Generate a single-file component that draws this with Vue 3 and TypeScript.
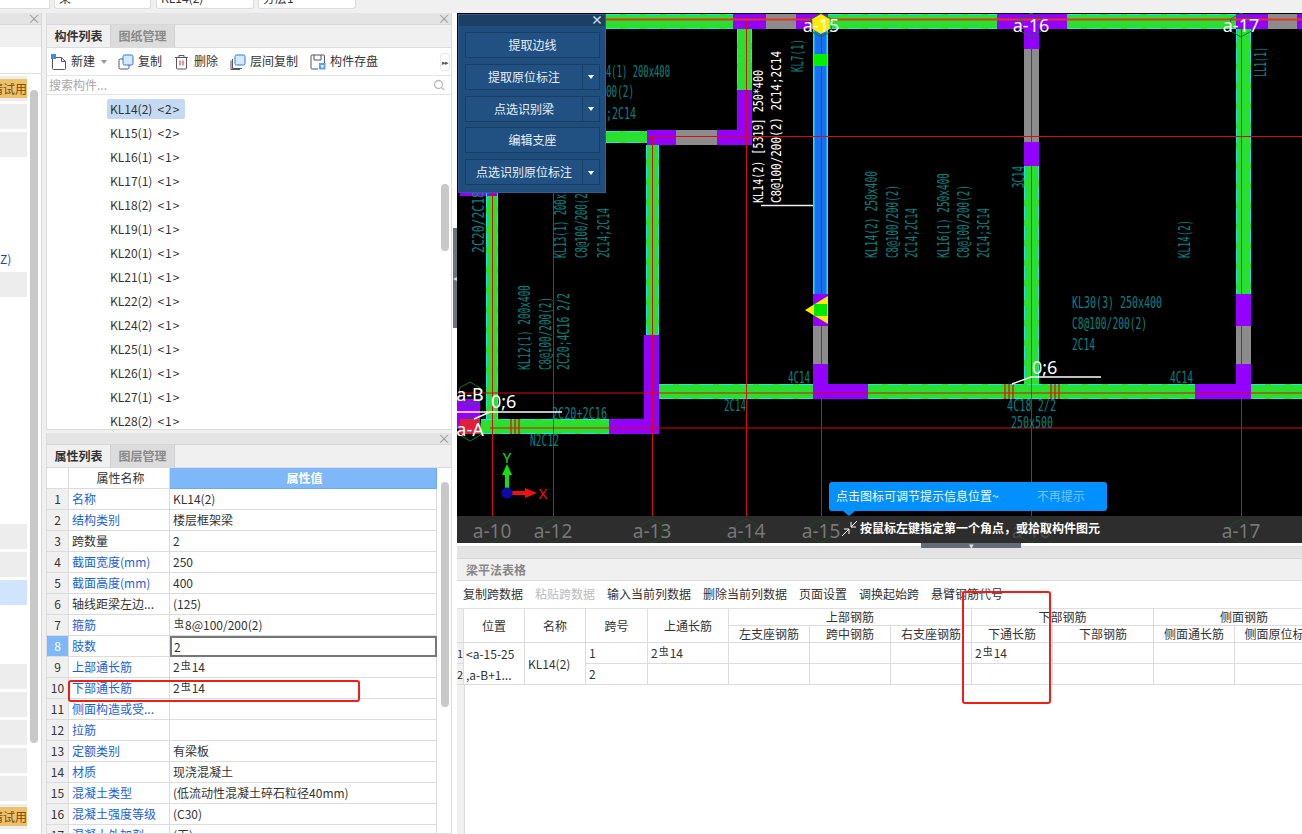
<script setup lang="ts">
type Seg = { x: number; y: number; w: number; h: number; c: string };
type Txt = { t: string; x: number; y: number; len: number; rot?: boolean };

const G = '#2ae02f', P = '#9400ff', S = '#8c8c8c', B = '#1a6ff0';
const seg = (x: number, y: number, w: number, h: number, c: string): Seg => ({ x, y, w, h, c });

const beams: Seg[] = [
  seg(606, 13, 127, 15, G), seg(733, 13, 33, 15, P), seg(766, 13, 30, 15, S), seg(796, 13, 32, 15, P),
  seg(828, 13, 169, 15, G), seg(997, 13, 70, 15, P), seg(1067, 13, 169, 15, G), seg(1236, 13, 32, 15, P),
  seg(1268, 13, 29, 15, S), seg(1297, 13, 5, 15, P),
  seg(737, 28, 15, 61, G), seg(737, 89, 15, 55, P),
  seg(606, 130, 41, 12, G), seg(647, 129, 29, 15, P), seg(676, 129, 41, 15, S), seg(717, 129, 35, 15, P),
  seg(646, 144, 13, 190, G), seg(644, 334, 15, 99, P), seg(609, 418, 50, 15, P), seg(481, 418, 128, 15, G),
  seg(486, 192, 12, 228, G), seg(460, 190, 37, 5, P), seg(457, 398, 23, 30, P),
  seg(659, 383, 154, 15, G), seg(813, 383, 55, 15, P), seg(868, 383, 327, 15, G), seg(1195, 383, 56, 15, P),
  seg(1251, 383, 51, 15, G),
  seg(813, 28, 15, 265, B), seg(813, 293, 15, 32, P), seg(813, 325, 15, 38, S), seg(813, 363, 15, 35, P),
  seg(1024, 13, 15, 35, P), seg(1024, 48, 15, 93, S), seg(1024, 141, 15, 24, P), seg(1024, 165, 15, 218, G),
  seg(1236, 28, 15, 265, G), seg(1236, 293, 15, 32, P), seg(1236, 325, 15, 38, S), seg(1236, 363, 15, 20, P),
];
const greens = beams.filter((b) => b.c === G);
const blues = beams.filter((b) => b.c === B);

const redV = [[492, 192, 515], [553, 192, 515], [652, 135, 515], [746, 18, 515], [821, 18, 515], [1031, 18, 515], [1241, 18, 515]];
const redH = [[606, 18.5, 1302], [647, 135.5, 1302], [457, 392, 1302], [490, 427, 1302]];

const teal: Txt[] = [
  { t: '4(1) 200x400', x: 606, y: 76, len: 64 },
  { t: '00(2)', x: 606, y: 96, len: 28 },
  { t: ';2C14', x: 606, y: 118, len: 30 },
  { t: 'KL7(1)', x: 803, y: 71, len: 33, rot: true },
  { t: 'LL1(1)', x: 1266, y: 76, len: 30, rot: true },
  { t: '2C20/2C18', x: 484, y: 252, len: 62, rot: true },
  { t: 'KL13(1) 200x', x: 566, y: 257, len: 64, rot: true },
  { t: 'C8@100/200(2)', x: 587, y: 257, len: 70, rot: true },
  { t: '2C14;2C14', x: 609, y: 257, len: 50, rot: true },
  { t: 'KL14(2) 250x400', x: 877, y: 257, len: 87, rot: true },
  { t: 'C8@100/200(2)', x: 898, y: 257, len: 73, rot: true },
  { t: '2C14;2C14', x: 917, y: 257, len: 50, rot: true },
  { t: 'KL16(1) 250x400', x: 949, y: 257, len: 85, rot: true },
  { t: 'C8@100/200(2)', x: 969, y: 257, len: 73, rot: true },
  { t: '2C14;3C14', x: 989, y: 257, len: 50, rot: true },
  { t: '3C14', x: 1024, y: 187, len: 22, rot: true },
  { t: 'KL14(2)', x: 1190, y: 257, len: 38, rot: true },
  { t: 'KL12(1) 200x400', x: 530, y: 369, len: 85, rot: true },
  { t: 'C8@100/200(2)', x: 551, y: 369, len: 73, rot: true },
  { t: '2C20;4C16 2/2', x: 569, y: 369, len: 77, rot: true },
  { t: '2C20+2C16', x: 552, y: 418, len: 55 },
  { t: 'N2C12', x: 530, y: 445, len: 29 },
  { t: '2C14', x: 724, y: 410, len: 22 },
  { t: '4C14', x: 788, y: 382, len: 22 },
  { t: 'KL30(3) 250x400', x: 1072, y: 307, len: 90 },
  { t: 'C8@100/200(2)', x: 1072, y: 328, len: 75 },
  { t: '2C14', x: 1072, y: 349, len: 23 },
  { t: '4C14', x: 1170, y: 382, len: 23 },
  { t: '4C18 2/2', x: 1007, y: 410, len: 49 },
  { t: '250x500', x: 1011, y: 427, len: 42 },
];
const whiteRot: Txt[] = [
  { t: 'KL14(2) [5319] 250*400', x: 763, y: 202, len: 133, rot: true },
  { t: 'C8@100/200(2) 2C14;2C14', x: 781, y: 202, len: 152, rot: true },
];
const rot = (a: Txt) => `translate(${a.x} ${a.y}) rotate(-90)`;

const hex = (cx: number, cy: number, r: number) =>
  [0, 1, 2, 3, 4, 5]
    .map((i) => {
      const a = (Math.PI / 3) * i - Math.PI / 2;
      return `${(cx + r * Math.cos(a)).toFixed(1)},${(cy + r * Math.sin(a)).toFixed(1)}`;
    })
    .join(' ');

const axes = [
  { l: 'a-10', x: 492 }, { l: 'a-12', x: 553 }, { l: 'a-13', x: 652 },
  { l: 'a-14', x: 746 }, { l: 'a-15', x: 821 }, { l: 'a-16', x: 1031, dim: true }, { l: 'a-17', x: 1241 },
];
const topAxes = [{ l: 'a-15', x: 821 }, { l: 'a-16', x: 1031 }, { l: 'a-17', x: 1241 }];
const ticks = [511, 515, 519, 1005, 1009, 1013, 1051, 1055, 1059];

const sideItems = [
  { top: 2, cls: 'tag' }, { top: 3, cls: '' }, { top: 3, cls: '' }, { top: 115, cls: '' },
  { top: 227, cls: '' }, { top: 3, cls: '' }, { top: 3, cls: 'sel' }, { top: 59, cls: '' },
  { top: 3, cls: '' }, { top: 3, cls: '' }, { top: 3, cls: '' }, { top: 3, cls: '' }, { top: 3, cls: 'tag' },
];

const members = [
  ['KL14(2)', 2], ['KL15(1)', 2], ['KL16(1)', 1], ['KL17(1)', 1], ['KL18(2)', 1], ['KL19(1)', 1], ['KL20(1)', 1],
  ['KL21(1)', 1], ['KL22(2)', 1], ['KL24(2)', 1], ['KL25(1)', 1], ['KL26(1)', 1], ['KL27(1)', 1], ['KL28(2)', 1],
];

const props = [
  { n: '名称', b: 1, v: 'KL14(2)' }, { n: '结构类别', b: 1, v: '楼层框架梁' }, { n: '跨数量', b: 0, v: '2' },
  { n: '截面宽度(mm)', b: 1, v: '250' }, { n: '截面高度(mm)', b: 1, v: '400' }, { n: '轴线距梁左边...', b: 0, v: '(125)' },
  { n: '箍筋', b: 1, v: '', pre: '', sym: true, post: '8@100/200(2)' }, { n: '肢数', b: 1, v: '2' },
  { n: '上部通长筋', b: 1, v: '', pre: '2', sym: true, post: '14' }, { n: '下部通长筋', b: 1, v: '', pre: '2', sym: true, post: '14' },
  { n: '侧面构造或受...', b: 1, v: '' }, { n: '拉筋', b: 1, v: '' }, { n: '定额类别', b: 1, v: '有梁板' },
  { n: '材质', b: 1, v: '现浇混凝土' }, { n: '混凝土类型', b: 1, v: '(低流动性混凝土碎石粒径40mm)' },
  { n: '混凝土强度等级', b: 1, v: '(C30)' }, { n: '混凝土外加剂', b: 1, v: '(无)' },
];
const actions = [
  { t: '复制跨数据' }, { t: '粘贴跨数据', off: true }, { t: '输入当前列数据' }, { t: '删除当前列数据' },
  { t: '页面设置' }, { t: '调换起始跨' }, { t: '悬臂钢筋代号' },
];
const subHeads = ['左支座钢筋', '跨中钢筋', '右支座钢筋', '下通长筋', '下部钢筋', '侧面通长筋', '侧面原位标注', ''];
const floats = [
  { t: '提取边线', d: false }, { t: '提取原位标注', d: true }, { t: '点选识别梁', d: true },
  { t: '编辑支座', d: false }, { t: '点选识别原位标注', d: true },
];
</script>

<template>
  <div class="app">
    <div class="top">
      <div class="combo c0"></div>
      <div class="combo c1"><span>梁</span></div>
      <div class="combo c2"><span>KL14(2)</span></div>
      <div class="combo c3"><span>分层1</span></div>
    </div>
    <div class="main">
      <aside class="side">
        <div class="head"><span class="x">×</span></div>
        <div class="side-tabs"></div>
        <div class="side-tool"></div>
        <div class="side-body">
          <div class="side-list">
            <div v-for="(it, i) in sideItems" :key="i" class="side-item" :class="it.cls" :style="{ marginTop: it.top + 'px' }">
              <span v-if="it.cls === 'tag'" class="tag-in">申请试用</span>
            </div>
          </div>
          <span class="side-z">Z)</span>
          <div class="bar side-bar"></div>
        </div>
      </aside>

      <div class="mid">
        <section class="panel list-panel">
          <div class="head"><span class="x">×</span></div>
          <div class="tabs"><span class="tab on">构件列表</span><span class="tab">图纸管理</span></div>
          <div class="tools">
            <span class="tool t-new">
              <svg width="16" height="16" viewBox="0 0 16 16"><path d="M1.5 3.5h9l4 4v7a1 1 0 0 1-1 1h-11a1 1 0 0 1-1-1z M10.5 3.5v4h4" fill="#fff" stroke="#556" /><rect x="0" y="0" width="5" height="5" fill="#3d8bee" /></svg>
              新建<i class="caret"></i>
            </span>
            <span class="tool">
              <svg width="16" height="16" viewBox="0 0 16 16"><rect x="1" y="5" width="10" height="10" rx="1.5" fill="#fff" stroke="#556" /><rect x="5" y="1" width="10" height="10" rx="1.5" fill="#d6e8fc" stroke="#2a7de1" /></svg>
              复制
            </span>
            <span class="tool">
              <svg width="16" height="16" viewBox="0 0 16 16"><path d="M1 3.5h13M5 3.5V1.5h5v2M2.5 3.5v10.5a1 1 0 0 0 1 1h8a1 1 0 0 0 1-1V3.5" fill="none" stroke="#556" /><path d="M6 6.5v5M9 6.5v5" stroke="#e02020" /></svg>
              删除
            </span>
            <span class="tool">
              <svg width="16" height="16" viewBox="0 0 16 16"><path d="M2.5 5v9.5H12M1 6.5v9h9" fill="none" stroke="#556" /><rect x="5" y="1" width="10" height="10" rx="1.5" fill="#d6e8fc" stroke="#2a7de1" /></svg>
              层间复制
            </span>
            <span class="tool">
              <svg width="16" height="16" viewBox="0 0 16 16"><path d="M2 1h11.5a1 1 0 0 1 1 1v7M8 15H2a1 1 0 0 1-1-1V2a1 1 0 0 1 1-1M4 1v5h7V1" fill="none" stroke="#556" /><rect x="9" y="9" width="6.5" height="6.5" fill="#5aa2f2" /><rect x="11" y="11" width="2.5" height="2.5" fill="#fff" /></svg>
              构件存盘
            </span>
            <span class="more">▸▸</span>
          </div>
          <div class="search">
            <span>搜索构件...</span>
            <svg width="12" height="12" viewBox="0 0 12 12"><circle cx="5.5" cy="5.5" r="4" fill="none" stroke="#bbb" stroke-width="1.3" /><path d="M8.5 8.5l2.5 2.5" stroke="#bbb" stroke-width="1.3" /></svg>
          </div>
          <div class="members">
            <div v-for="(m, i) in members" :key="m[0]" class="member">
              <span class="mem" :class="{ picked: i === 0 }">{{ m[0] }}<span class="cnt">&lt;{{ m[1] }}&gt;</span></span>
            </div>
            <div class="bar list-bar"></div>
          </div>
        </section>

        <section class="panel prop-panel">
          <div class="head"><span class="x">×</span></div>
          <div class="tabs"><span class="tab on">属性列表</span><span class="tab">图层管理</span></div>
          <div class="props">
            <div class="prow phead">
              <div class="pnum blank"></div>
              <div class="pname">属性名称</div>
              <div class="pval">属性值</div>
            </div>
            <div v-for="(p, i) in props" :key="i" class="prow" :class="{ active: i === 7 }">
              <div class="pnum">{{ i + 1 }}</div>
              <div class="pname" :class="{ blue: p.b }">{{ p.n }}</div>
              <div class="pval">
                <template v-if="p.sym">{{ p.pre }}<span class="rebar">虫</span>{{ p.post }}</template>
                <template v-else>{{ p.v }}</template>
              </div>
            </div>
            <div class="mark mark-a"></div>
            <div class="bar prop-bar"></div>
          </div>
        </section>
      </div>

      <div class="splitter"><span class="handle-v">◂</span></div>

      <div class="right">
        <div class="canvas">
          <svg class="cad" width="845" height="530" viewBox="457 12 845 530">
            <rect x="457" y="12" width="845" height="530" fill="#000" />
            <g v-for="(b, i) in beams" :key="i"><rect :x="b.x" :y="b.y" :width="b.w" :height="b.h" :fill="b.c" /></g>
            <g fill="none" stroke="#1ae8e8" stroke-width="1" stroke-dasharray="14 6">
              <template v-for="(b, i) in greens" :key="'g' + i">
                <template v-if="b.w > b.h">
                  <line :x1="b.x" :y1="b.y + 0.5" :x2="b.x + b.w" :y2="b.y + 0.5" />
                  <line :x1="b.x" :y1="b.y + b.h - 0.5" :x2="b.x + b.w" :y2="b.y + b.h - 0.5" />
                </template>
                <template v-else>
                  <line :x1="b.x + 0.5" :y1="b.y" :x2="b.x + 0.5" :y2="b.y + b.h" />
                  <line :x1="b.x + b.w - 0.5" :y1="b.y" :x2="b.x + b.w - 0.5" :y2="b.y + b.h" />
                </template>
              </template>
            </g>
            <g v-for="(b, i) in blues" :key="'b' + i">
              <line :x1="b.x + 0.75" :y1="b.y" :x2="b.x + 0.75" :y2="b.y + b.h" stroke="#18e8f0" stroke-width="1.5" />
              <line :x1="b.x + b.w - 0.75" :y1="b.y" :x2="b.x + b.w - 0.75" :y2="b.y + b.h" stroke="#18e8f0" stroke-width="1.5" />
            </g>
            <line v-for="(l, i) in redV" :key="'v' + i" :x1="l[0] + 0.5" :y1="l[1]" :x2="l[0] + 0.5" :y2="l[2]" stroke="#d80c0c" />
            <line v-for="(l, i) in redH" :key="'h' + i" :x1="l[0]" :y1="l[1]" :x2="l[2]" :y2="l[1]" :stroke="i === 0 ? '#e8341c' : '#d80c0c'" :stroke-width="i === 0 ? 2 : 1.2" />
            <line v-for="(x, i) in ticks" :key="'t' + i" :x1="x" :y1="i < 3 ? 418 : 383" :x2="x" :y2="i < 3 ? 433 : 398" stroke="#f01010" stroke-width="1.4" />

            <rect x="814" y="53" width="13" height="12" fill="#00f000" />
            <polygon points="805,309 828,295 828,323" fill="#ffec00" />
            <rect x="814" y="303" width="13" height="12" fill="#00e800" />
            <polygon :points="hex(821, 23, 10)" fill="#ffec00" />

            <g class="teal">
              <template v-for="(a, i) in teal" :key="i">
                <text v-if="a.rot" :transform="rot(a)" :textLength="a.len" lengthAdjust="spacingAndGlyphs">{{ a.t }}</text>
                <text v-else :x="a.x" :y="a.y" :textLength="a.len" lengthAdjust="spacingAndGlyphs">{{ a.t }}</text>
              </template>
            </g>
            <g class="whitecad">
              <text v-for="(a, i) in whiteRot" :key="i" :transform="rot(a)" :textLength="a.len" lengthAdjust="spacingAndGlyphs">{{ a.t }}</text>
            </g>
            <line x1="761" y1="204.5" x2="813" y2="204.5" stroke="#eee" stroke-width="1.4" />

            <polygon v-for="a in topAxes" :key="a.l" :points="hex(a.x, 24, 12)" fill="none" stroke="#0e7a20" />
            <text v-for="a in topAxes" :key="'l' + a.l" class="axis-top" :x="a.x" y="31">{{ a.l }}</text>

            <polygon :points="hex(470, 393, 12)" fill="none" stroke="#0e7a20" />
            <polygon :points="hex(470, 428, 12)" fill="none" stroke="#0e7a20" />
            <rect x="460" y="418" width="20" height="15" fill="#e0203a" />
            <text class="axis-top" x="470" y="400">a-B</text>
            <text class="axis-top" x="470" y="435">a-A</text>
            <text class="axis-top left" x="491" y="407">0;6</text>
            <path d="M457 411h105M490 411l-16 7" fill="none" stroke="#fff" stroke-width="1.4" />
            <text class="axis-top left" x="1032" y="373">0;6</text>
            <path d="M1101 376h-70l-19 7" fill="none" stroke="#fff" stroke-width="1.4" />

            <path d="M507 473v16" stroke="#10e010" stroke-width="4" />
            <polygon points="507,463 502,474 512,474" fill="#10e010" />
            <path d="M512 492h14" stroke="#f01010" stroke-width="4" />
            <polygon points="537,492 525,487 525,497" fill="#f01010" />
            <circle cx="507" cy="492" r="5.5" fill="#0a0aa8" />
            <text class="coord" x="507" y="462" fill="#10e010">Y</text>
            <text class="coord" x="543" y="498" fill="#f01010">X</text>

            <rect x="457" y="515" width="845" height="27" fill="#2d2d2d" />
            <polygon v-for="a in axes" :key="'hx' + a.l" :points="hex(a.x, 530, 12)" fill="none" stroke="#1c4a24" />
            <text v-for="a in axes" :key="'ax' + a.l" class="axis-bottom" :class="{ dim: a.dim }" :x="a.x" y="537">{{ a.l }}</text>
          </svg>

          <div class="float">
            <div class="float-title"><span>×</span></div>
            <div class="float-list">
              <div v-for="f in floats" :key="f.t" class="fbtn">
                <span class="fmain">{{ f.t }}</span>
                <span v-if="f.d" class="fdrop"><i></i></span>
              </div>
            </div>
          </div>

          <div class="tip">
            <span>点击图标可调节提示信息位置~</span>
            <span class="tip-off">不再提示</span>
            <i class="tip-arrow"></i>
          </div>
          <div class="status">
            <svg width="17" height="17" viewBox="0 0 17 17"><path d="M1 16l7-7M3 9h5v5M16 1l-6 6M15 7h-5V2" fill="none" stroke="#fff" stroke-width="1" /></svg>
            <span>按鼠标左键指定第一个角点，或拾取构件图元</span>
          </div>
        </div>

        <div class="hsplit"><span class="handle-h">▾</span></div>

        <section class="bottom">
          <div class="b-head"></div>
          <div class="b-title">梁平法表格</div>
          <div class="b-tools"><span v-for="a in actions" :key="a.t" :class="{ off: a.off }">{{ a.t }}</span></div>
          <div class="grid">
            <div class="cell num r2"></div>
            <div class="cell r2">位置</div>
            <div class="cell r2">名称</div>
            <div class="cell r2">跨号</div>
            <div class="cell r2">上通长筋</div>
            <div class="cell s3">上部钢筋</div>
            <div class="cell s2">下部钢筋</div>
            <div class="cell s3">侧面钢筋</div>
            <div v-for="h in subHeads" :key="h" class="cell">{{ h }}</div>

            <div class="cell num">1</div>
            <div class="cell r2 pos">&lt;a-15-25<br />,a-B+1...</div>
            <div class="cell r2 name">KL14(2)</div>
            <div class="cell lf">1</div>
            <div class="cell lf">2<span class="rebar">虫</span>14</div>
            <div class="cell"></div><div class="cell"></div><div class="cell"></div>
            <div class="cell lf">2<span class="rebar">虫</span>14</div>
            <div class="cell"></div><div class="cell"></div><div class="cell"></div><div class="cell"></div>

            <div class="cell num">2</div>
            <div class="cell lf">2</div>
            <div class="cell"></div><div class="cell"></div><div class="cell"></div><div class="cell"></div>
            <div class="cell"></div><div class="cell"></div><div class="cell"></div><div class="cell"></div><div class="cell"></div>
          </div>
          <div class="num-rest"></div>
          <div class="mark mark-b"></div>
        </section>
      </div>
    </div>
  </div>
</template>

<style>
html, body { margin: 0; background: #f0f0f0; }
</style>

<style scoped>
.app {
  width: 1302px; height: 834px; overflow: hidden; background: #f0f0f0;
  font: 12px/1.2 "Noto Sans CJK SC", "Noto Sans", sans-serif; color: #333;
  display: flex; flex-direction: column;
}
.top { height: 13px; display: flex; flex: none; }
.combo { height: 9px; background: #fff; border: 1px solid #dcdcdc; border-top: 0; border-radius: 0 0 3px 3px; margin-right: 4px; overflow: hidden; box-sizing: border-box; line-height: 2px; padding-left: 4px; width: 98px; }
.combo span { display: block; transform: translateY(-3px); }
.c0 { width: 50px; border-left: 0; border-radius: 0; }
.c1 { width: 97px; margin-right: 5px; }
.main { flex: 1; display: flex; min-height: 0; }

.head { height: 11px; background: #e4e4e4; border-bottom: 1px solid #d8d8d8; display: flex; justify-content: flex-end; flex: none; }
.x { width: 14px; color: #999; font-size: 13px; line-height: 10px; text-align: center; }
.bar { position: absolute; background: #c8c8c8; border-radius: 4px; width: 8px; }

.side { width: 41px; flex: none; background: #fff; border-right: 1px solid #d8d8d8; display: flex; flex-direction: column; margin-right: 4px; }
.side-tabs { height: 22px; background: #f0f0f0; flex: none; }
.side-tool { height: 27px; background: #fff; flex: none; border-bottom: 1px solid #e0e0e0; box-sizing: border-box; }
.side-body { flex: 1; position: relative; background: #fff; }
.side-list { width: 27px; display: flex; flex-direction: column; }
.side-item { height: 25px; background: #ededed; flex: none; position: relative; overflow: hidden; }
.side-item.sel { background: #d0e5fd; }
.tag-in { position: absolute; right: 0; top: 3px; width: 27px; height: 19px; background: #edc06c; color: #7a4a10; line-height: 19px; display: flex; justify-content: flex-end; overflow: hidden; white-space: nowrap; }
.side-z { position: absolute; left: 0; top: 178px; color: #1a4a9a; }
.side-bar { left: 30px; top: 16px; height: 653px; }

.mid { width: 406px; flex: none; display: flex; flex-direction: column; gap: 3px; }
.panel { background: #fff; border: 1px solid #dcdcdc; border-top: 0; box-sizing: border-box; display: flex; flex-direction: column; }
.list-panel { height: 417px; }
.prop-panel { flex: 1; min-height: 0; }
.tabs { height: 22px; flex: none; display: flex; background: #f0f0f0; border-bottom: 1px solid #dcdcdc; box-sizing: content-box; }
.tab { width: 64px; line-height: 22px; text-align: center; color: #8a8a8a; background: #dcdcdc; font-weight: 700; border-right: 1px solid #cfcfcf; box-sizing: border-box; }
.tab.on { color: #333; background: #f0f0f0; }
.tools { height: 27px; flex: none; display: flex; align-items: center; padding-left: 4px; background: #fff; border-bottom: 1px solid #e4e4e4; position: relative; }
.tool { display: flex; align-items: center; gap: 4px; margin-right: 12px; white-space: nowrap; }
.t-new { margin-right: 11px; }
.caret { width: 0; height: 0; border: 3px solid transparent; border-top: 4px solid #999; margin: 3px 0 0 2px; }
.more { position: absolute; right: 1px; top: 5px; width: 10px; height: 18px; background: #fff; border: 1px solid #e8e8e8; border-radius: 3px; font-size: 7px; line-height: 17px; color: #555; text-align: center; box-sizing: border-box; overflow: hidden; letter-spacing: -1px; }
.search { height: 18px; flex: none; display: flex; align-items: center; justify-content: space-between; padding: 0 6px 0 2px; color: #a8a8a8; border-bottom: 1px solid #e4e4e4; }
.members { flex: 1; position: relative; padding-top: 2px; overflow: hidden; }
.member { height: 24px; padding-left: 63px; display: flex; align-items: center; color: #333; white-space: pre; }
.mem { padding: 3px 0; }
.picked { background: #c3daf2; border-radius: 2px; padding: 3px 5px 3px 3px; margin-left: -3px; }
.cnt { margin-left: 5px; letter-spacing: 1px; }
.list-bar { right: 2px; top: 89px; height: 67px; }

.props { flex: 1; position: relative; overflow: hidden; background: #fff; }
.prow { display: grid; grid-template-columns: 22px 101px 267px; height: 21px; }
.prow > div { border-right: 1px solid #dcdcdc; border-bottom: 1px solid #dcdcdc; box-sizing: border-box; line-height: 20px; white-space: nowrap; overflow: hidden; padding-left: 3px; }
.pnum { background: #f0f0f0; text-align: center; padding-left: 0 !important; }
.pnum.blank { background: #fff; }
.blue { color: #1a5fd8; }
.phead .pname { text-align: center; }
.phead .pval { background: #7eb8f8; color: #fff; text-align: center; font-weight: 700; border-color: #6aaaf0; }
.active .pnum { background: #7eb8f8; color: #fff; }
.active .pval { border: 2px solid #777; line-height: 17px; padding-left: 2px; }
.rebar { font-size: 10px; position: relative; top: -3px; margin: 0 1px; }
.mark { position: absolute; border: 2px solid #f01e14; border-radius: 3px; box-sizing: border-box; pointer-events: none; }
.mark-a { left: 21px; top: 212px; width: 292px; height: 22px; }
.prop-bar { right: 2px; top: 14px; height: 225px; }

.splitter { width: 5px; flex: none; position: relative; background: #fff; }
.handle-v { position: absolute; left: 1px; top: 215px; width: 4px; height: 100px; background: #6b737e; color: #ddd; font-size: 8px; line-height: 100px; overflow: hidden; }

.right { flex: 1; min-width: 0; display: flex; flex-direction: column; }
.canvas { height: 530px; flex: none; position: relative; overflow: hidden; }
.cad { display: block; }
.teal text { font: 16px "DejaVu Sans Mono", monospace; fill: #0a8080; }
.whitecad text { font: 14px "DejaVu Sans Mono", monospace; fill: #fff; }
.axis-top { font: 18px "Noto Sans", sans-serif; fill: #fff; text-anchor: middle; }
.axis-top.left { text-anchor: start; }
.axis-bottom { font: 19px "Noto Sans", sans-serif; fill: #777; text-anchor: middle; }
.axis-bottom.dim { fill: #4a4a4a; }
.coord { font: 15px "Noto Sans", sans-serif; text-anchor: middle; }

.float { position: absolute; left: 1px; top: 1px; width: 148px; height: 179px; background: #1f4d7c; border: 1px solid #2a6098; box-sizing: border-box; }
.float-title { height: 11px; background: #1c3f64; color: #cfe0f0; text-align: right; padding-right: 2px; font-size: 12px; line-height: 10px; font-weight: 700; }
.float-list { display: flex; flex-direction: column; gap: 5.75px; padding: 6px 5px 0 6px; }
.fbtn { height: 26px; display: flex; color: #e8eef5; border: 1px solid #1a3d62; box-sizing: border-box; background: #215182; }
.fmain { flex: 1; text-align: center; line-height: 24px; white-space: nowrap; }
.fdrop { width: 17px; border-left: 1px solid #1a3d62; display: flex; align-items: center; justify-content: center; box-sizing: border-box; }
.fdrop i { width: 0; height: 0; border: 3.5px solid transparent; border-top: 4px solid #fff; margin-top: 4px; }

.tip { position: absolute; left: 372px; top: 469px; width: 278px; height: 29px; background: #0090ff; border-radius: 3px; color: #f4faff; display: flex; align-items: center; padding-left: 7px; box-sizing: border-box; }
.tip-off { margin-left: 38px; color: #7cc4ff; }
.tip-arrow { position: absolute; left: 14px; top: 29px; width: 0; height: 0; border: 6px solid transparent; border-top: 5px solid #0090ff; border-bottom: 0; }
.status { position: absolute; left: 384px; top: 507px; display: flex; align-items: center; gap: 2px; color: #fff; font-weight: 700; white-space: nowrap; }

.hsplit { height: 3px; flex: none; background: #fff; position: relative; z-index: 1; }
.handle-h { position: absolute; left: 464px; top: 0; width: 100px; height: 5px; background: #646c78; color: #ddd; font-size: 9px; line-height: 5px; text-align: center; overflow: hidden; }

.bottom { flex: 1; min-height: 0; position: relative; background: #fff; overflow: hidden; }
.b-head { height: 13px; background: #e4e4e4; border-top: 1px solid #dcdcdc; border-bottom: 1px solid #d8d8d8; box-sizing: border-box; }
.b-title { height: 21px; background: #f0f0f0; line-height: 21px; padding-left: 9px; color: #888; font-weight: 700; border-bottom: 1px solid #dcdcdc; box-sizing: content-box; }
.b-tools { height: 28px; display: flex; gap: 12px; align-items: center; padding-left: 6px; border-bottom: 1px solid #e0e0e0; box-sizing: border-box; white-space: nowrap; }
.off { color: #bbb; }
.grid { display: grid; width: 978px; grid-template-columns: 7px 61px 61px 62px 81px 81px 81px 81px 81px 101px 81px 92px 8px; grid-template-rows: 17px 17px 21px 21px; }
.cell { border-right: 1px solid #dcdcdc; border-bottom: 1px solid #dcdcdc; box-sizing: border-box; text-align: center; line-height: 16px; white-space: nowrap; overflow: hidden; }
.cell.r2 { grid-row: span 2; display: flex; align-items: center; justify-content: center; }
.cell.s3 { grid-column: span 3; }
.cell.s2 { grid-column: span 2; }
.cell.num { background: #f0f0f0; line-height: 20px; font-size: 11px; text-align: left; }
.cell.num.r2 { display: block; }
.cell.lf { text-align: left; padding-left: 3px; line-height: 20px; }
.cell.pos { display: block; line-height: 21px; text-align: left; padding-left: 2px; white-space: normal; }
.cell.name { justify-content: flex-start; padding-left: 3px; }
.num-rest { width: 7px; background: #f0f0f0; height: 150px; border-right: 1px solid #dcdcdc; box-sizing: content-box; }
.mark-b { left: 505px; top: 45px; width: 89px; height: 113px; }
</style>
